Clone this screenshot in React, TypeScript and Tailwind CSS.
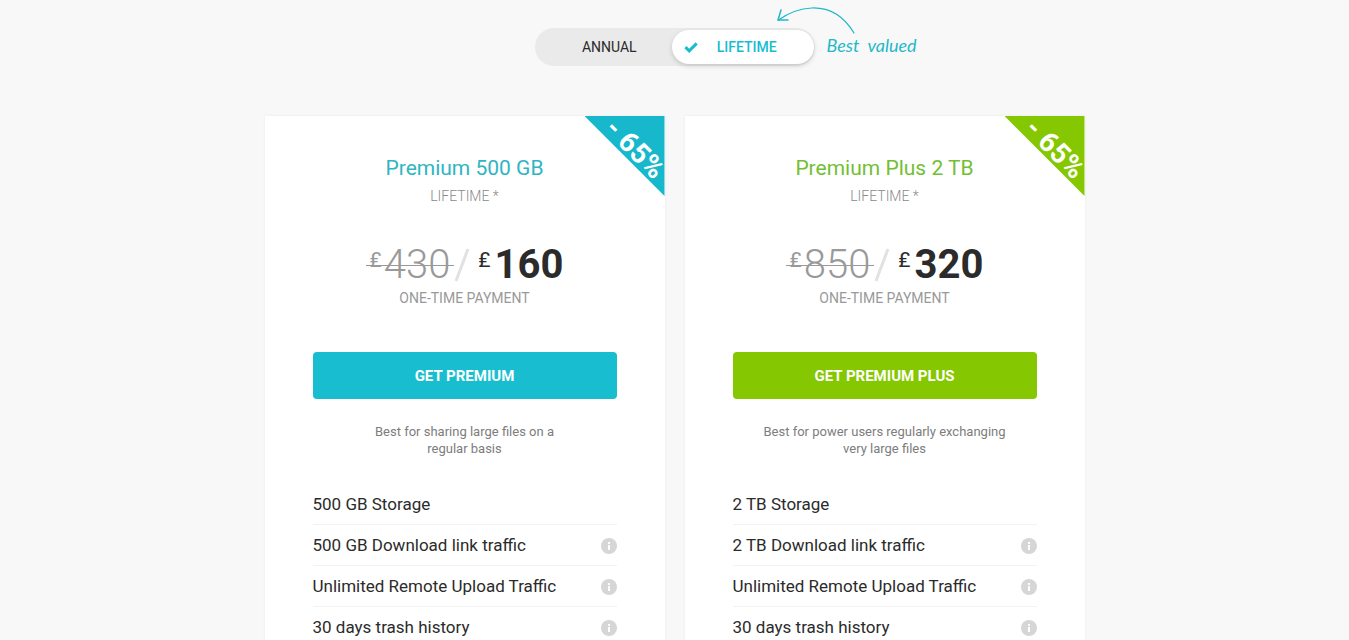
import React, { useState } from "react";
import { clsx } from "clsx";

type Billing = "annual" | "lifetime";

interface Feature {
  label: string;
  info?: boolean;
}

interface Plan {
  name: string;
  accent: "cyan" | "green";
  oldPrice: string;
  price: string;
  cta: string;
  summary: string;
  summaryWidth: string;
  features: Feature[];
}

const plans: Plan[] = [
  {
    name: "Premium 500 GB",
    accent: "cyan",
    oldPrice: "430",
    price: "160",
    cta: "Get Premium",
    summary: "Best for sharing large files on a regular basis",
    summaryWidth: "max-w-[210px]",
    features: [
      { label: "500 GB Storage" },
      { label: "500 GB Download link traffic", info: true },
      { label: "Unlimited Remote Upload Traffic", info: true },
      { label: "30 days trash history", info: true },
    ],
  },
  {
    name: "Premium Plus 2 TB",
    accent: "green",
    oldPrice: "850",
    price: "320",
    cta: "Get Premium Plus",
    summary: "Best for power users regularly exchanging very large files",
    summaryWidth: "max-w-[260px]",
    features: [
      { label: "2 TB Storage" },
      { label: "2 TB Download link traffic", info: true },
      { label: "Unlimited Remote Upload Traffic", info: true },
      { label: "30 days trash history", info: true },
    ],
  },
];

const CheckIcon: React.FC = () => (
  <svg viewBox="0 0 14 11" className="h-[11px] w-[14px]" fill="none" stroke="currentColor" strokeWidth="3" aria-hidden="true">
    <path d="M1.4 5.2 5.2 8.8 12.7 1.4" />
  </svg>
);

const InfoIcon: React.FC = () => (
  <svg viewBox="0 0 16 16" className="size-4" aria-hidden="true">
    <circle cx="8" cy="8" r="8" fill="#d6d6d6" />
    <path fill="#fff" d="M7 4h2v2H7zM7 7h2v5H7z" />
  </svg>
);

const BestValued: React.FC = () => (
  <div className="absolute top-1/2 left-full -translate-y-1/2 pl-3 text-[#1fb8c8]">
    <svg
      viewBox="0 0 80 28"
      className="absolute bottom-full -left-[38px] h-7 w-20"
      fill="none"
      stroke="currentColor"
      strokeLinecap="round"
      aria-hidden="true"
    >
      <path strokeWidth="1.2" d="M77 26C66 8 51 .5 35 1 23 1.500 12 5.500 1.500 13" />
      <path strokeWidth="1.5" d="M4 3 1 13 11 13" />
    </svg>
    <span className="font-[Lato,cursive] text-[18px] leading-5 whitespace-pre italic">Best  valued</span>
  </div>
);

const BillingSwitch: React.FC = () => {
  const [billing, setBilling] = useState<Billing>("lifetime");

  return (
    <div className="relative flex h-[38px] w-[280px] shrink-0 items-center rounded-full bg-[#eaeaea]">
      {(["annual", "lifetime"] as Billing[]).map((option) => {
        const active = billing === option;
        return (
          <button
            key={option}
            type="button"
            aria-pressed={active}
            onClick={() => setBilling(option)}
            className={clsx(
              "relative flex flex-1 cursor-pointer items-center justify-center rounded-full text-sm uppercase",
              active
                ? "-ml-1 mr-px h-[34px] bg-white pl-2 font-medium text-[#17bdcf] shadow-[0_2px_5px_rgba(0,0,0,0.16)]"
                : "h-full pl-2 text-[#2b2b2b]"
            )}
          >
            {active && (
              <span className="absolute left-3">
                <CheckIcon />
              </span>
            )}
            {option}
          </button>
        );
      })}
      <BestValued />
    </div>
  );
};

const PlanCard: React.FC<{ plan: Plan }> = ({ plan }) => {
  const cyan = plan.accent === "cyan";

  return (
    <article className="relative flex flex-1 flex-col bg-white px-12 pt-[37px] pb-10 text-center shadow-[0_0_3px_rgba(0,0,0,0.06)]">
      <div
        className={clsx(
          "absolute top-0 right-0 size-20 [clip-path:polygon(0_0,100%_0,100%_100%)]",
          cyan ? "bg-[#17b8cc]" : "bg-[#85c700]"
        )}
      >
        <span className="absolute top-[17px] left-2.5 w-20 rotate-45 text-center text-[28px] leading-8 font-bold whitespace-nowrap text-white">
          - 65%
        </span>
      </div>

      <h2 className={clsx("text-[21px] leading-[31px]", cyan ? "text-[#2fb5c3]" : "text-[#72bf35]")}>{plan.name}</h2>
      <p className="text-sm leading-6 font-light text-[#8a8a8a]">LIFETIME *</p>

      <div className="mt-8 flex h-[50px] items-center justify-center">
        <del className="relative flex h-full items-center px-1 text-[#999] no-underline after:absolute after:inset-x-0 after:top-1/2 after:h-px after:bg-[#999]">
          <span className="mb-2.5 text-[21px] leading-7">₤</span>
          <span className="ml-0.5 text-[40px] leading-[50px] font-light">{plan.oldPrice}</span>
        </del>
        <svg viewBox="0 0 16 34" className="h-[34px] w-4" stroke="#e2e2e2" strokeWidth="3" aria-hidden="true">
          <path d="M14 1 2 33" />
        </svg>
        <span className="flex items-center pl-2 text-[#2b2b2b]">
          <span className="mb-2.5 text-[21px] leading-7">₤</span>
          <span className="ml-1 text-[40px] leading-[50px] font-bold">{plan.price}</span>
        </span>
      </div>
      <p className="text-sm leading-4 text-[#999]">ONE-TIME PAYMENT</p>

      <button
        type="button"
        className={clsx(
          "mt-[46px] h-[47px] w-full cursor-pointer rounded pt-px text-[15px] font-bold text-white uppercase",
          cyan ? "bg-[#18bed0]" : "bg-[#85c700]"
        )}
      >
        {plan.cta}
      </button>

      <p className={clsx("mx-auto mt-6 text-[13px] leading-[17px] text-[#7d7d7d]", plan.summaryWidth)}>{plan.summary}</p>

      <ul className="mt-[27px] text-left">
        {plan.features.map((feature) => (
          <li key={feature.label} className="flex h-[41px] items-center justify-between border-b border-[#f2f2f2] pt-0.5 text-[17px] text-[#2b2b2b]">
            {feature.label}
            {feature.info && (
              <button type="button" aria-label={`About ${feature.label}`} className="cursor-pointer">
                <InfoIcon />
              </button>
            )}
          </li>
        ))}
      </ul>
    </article>
  );
};

const App: React.FC = () => {
  return (
    <main className="flex h-screen flex-col items-center overflow-hidden bg-[#f8f8f8] pt-7 font-[Roboto,sans-serif]">
      <BillingSwitch />
      <section className="mt-[50px] flex w-full max-w-[820px] items-start gap-5">
        {plans.map((plan) => (
          <PlanCard key={plan.name} plan={plan} />
        ))}
      </section>
    </main>
  );
};

export default App;
